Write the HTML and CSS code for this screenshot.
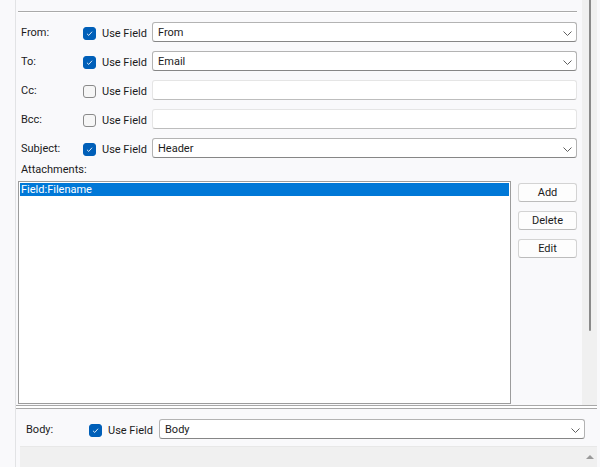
FILE: index.html
```html
<!DOCTYPE html>
<html lang="en">
<head>
    <meta charset="UTF-8">
    <title>Mail Fields</title>
    <link rel="stylesheet" href="styles.css">
</head>
<body>
    <div class="frame">
        <div class="upper">
            <div class="panel">
                <div class="rule"></div>

                <div class="row">
                    <span class="label">From:</span>
                    <span class="use"><span class="check on"><svg viewBox="0 0 13 13"><polyline points="3.5,6.8 5.6,8.8 9.5,4.4"/></svg></span>Use Field</span>
                    <div class="combo">From<svg class="chev" viewBox="0 0 9 5"><polyline points="0.5,0.5 4.5,4.5 8.5,0.5"/></svg></div>
                </div>
                <div class="row">
                    <span class="label">To:</span>
                    <span class="use"><span class="check on"><svg viewBox="0 0 13 13"><polyline points="3.5,6.8 5.6,8.8 9.5,4.4"/></svg></span>Use Field</span>
                    <div class="combo">Email<svg class="chev" viewBox="0 0 9 5"><polyline points="0.5,0.5 4.5,4.5 8.5,0.5"/></svg></div>
                </div>
                <div class="row">
                    <span class="label">Cc:</span>
                    <span class="use"><span class="check"></span>Use Field</span>
                    <div class="textbox"></div>
                </div>
                <div class="row">
                    <span class="label">Bcc:</span>
                    <span class="use"><span class="check"></span>Use Field</span>
                    <div class="textbox"></div>
                </div>
                <div class="row">
                    <span class="label">Subject:</span>
                    <span class="use"><span class="check on"><svg viewBox="0 0 13 13"><polyline points="3.5,6.8 5.6,8.8 9.5,4.4"/></svg></span>Use Field</span>
                    <div class="combo">Header<svg class="chev" viewBox="0 0 9 5"><polyline points="0.5,0.5 4.5,4.5 8.5,0.5"/></svg></div>
                </div>

                <div class="attach-label">Attachments:</div>
                <div class="attach">
                    <div class="list">
                        <div class="item selected">Field:Filename</div>
                    </div>
                    <div class="buttons">
                        <button class="btn">Add</button>
                        <button class="btn">Delete</button>
                        <button class="btn">Edit</button>
                    </div>
                </div>
            </div>
            <div class="vscroll"><div class="thumb"></div></div>
        </div>

        <div class="divider"></div>

        <div class="lower">
            <div class="row body-row">
                <span class="label">Body:</span>
                <span class="use"><span class="check on"><svg viewBox="0 0 13 13"><polyline points="3.5,6.8 5.6,8.8 9.5,4.4"/></svg></span>Use Field</span>
                <div class="combo">Body<svg class="chev" viewBox="0 0 9 5"><polyline points="0.5,0.5 4.5,4.5 8.5,0.5"/></svg></div>
            </div>
            <div class="strip">
                <div class="strip-scroll"><span class="arrow-up"></span></div>
            </div>
        </div>
    </div>
</body>
</html>
```

FILE: styles.css
```css
body {
    margin: 0;
    background: #f9f9fb;
    font-family: Roboto, "Liberation Sans", Arial, sans-serif;
    font-size: 11px;
    color: #1b1b1b;
    overflow: hidden;
}

.frame {
    margin-left: 15px;
    width: 581px;
    height: 467px;
    border-left: 1px solid #e2e3e5;
    display: flex;
    flex-direction: column;
}

.upper {
    display: flex;
    height: 405px;
}

.panel {
    flex: 1;
    padding: 0 5px 0 2px;
}

.rule {
    margin-top: 11px;
    border-top: 1px solid #a9a9a9;
    border-bottom: 1px solid #ffffff;
}

.row {
    display: flex;
    align-items: center;
    height: 20px;
    margin-top: 9px;
    padding-left: 3px;
}

.row:first-of-type {
    margin-top: 10px;
}

.label {
    width: 62px;
    padding-top: 1px;
}

.use {
    width: 69px;
    display: flex;
    align-items: center;
    padding-top: 2px;
}

.check {
    width: 11px;
    height: 11px;
    border: 1px solid #8a8a8a;
    border-radius: 3px;
    background: #f6f6f6;
    margin-right: 6px;
    flex-shrink: 0;
}

.check.on {
    background: #005fb8;
    border-color: #005fb8;
}

.check svg {
    display: block;
    width: 11px;
    height: 11px;
}

.check polyline {
    fill: none;
    stroke: #ffffff;
    stroke-width: 1;
}

.combo,
.textbox {
    flex: 1;
    height: 18px;
    box-sizing: content-box;
    background: #ffffff;
    border-radius: 3px;
    display: flex;
    align-items: center;
    padding-left: 5px;
    position: relative;
}

.combo {
    border: 1px solid #b3b3b3;
    border-bottom-color: #868686;
}

.textbox {
    border: 1px solid #e5e5e5;
    border-bottom-color: #bdbdbd;
}

.chev {
    position: absolute;
    right: 4px;
    top: 8px;
    width: 9px;
    height: 5px;
}

.chev polyline {
    fill: none;
    stroke: #5f5f5f;
    stroke-width: 1;
}

.attach-label {
    margin-top: 5px;
    padding-left: 3px;
    line-height: 14px;
}

.attach {
    display: flex;
    margin-top: 4px;
}

.list {
    width: 489px;
    height: 219px;
    background: #ffffff;
    border: 1px solid #9c9c9c;
    padding: 1px;
    box-sizing: content-box;
}

.item {
    height: 13px;
    line-height: 14px;
    padding-left: 1px;
}

.item.selected {
    background: #0078d7;
    color: #ffffff;
}

.buttons {
    margin-left: 7px;
    padding-top: 2px;
    display: flex;
    flex-direction: column;
    gap: 9px;
}

.btn {
    width: 59px;
    height: 19px;
    padding: 0;
    background: #fdfdfd;
    border: 1px solid #d3d3d3;
    border-bottom-color: #bcbcbc;
    border-radius: 3px;
    font-family: inherit;
    font-size: 11px;
    color: #1b1b1b;
}

.vscroll {
    width: 15px;
    background: #f0f0f0;
    display: flex;
    justify-content: center;
}

.thumb {
    width: 2px;
    height: 331px;
    background: #8a8a8a;
    border-radius: 0 0 2px 2px;
}

.divider {
    height: 2px;
    border-top: 1px solid #a8a8a8;
    border-bottom: 1px solid #a8a8a8;
    background: #ffffff;
}

.lower {
    flex: 1;
    display: flex;
    flex-direction: column;
}

.body-row {
    margin-top: 10px;
    padding-left: 10px;
    padding-right: 12px;
}

.body-row .label {
    width: 63px;
}

.body-row .use {
    width: 70px;
}

.strip {
    flex: 1;
    margin-top: 7px;
    margin-left: 4px;
    background: #f0f0f0;
    border-top: 1px solid #e8e8e8;
    display: flex;
    justify-content: flex-end;
}

.strip-scroll {
    width: 15px;
    display: flex;
    justify-content: center;
    padding-top: 8px;
}

.arrow-up {
    width: 0;
    height: 0;
    border-left: 4px solid transparent;
    border-right: 4px solid transparent;
    border-bottom: 4px solid #9a9a9a;
}
```
